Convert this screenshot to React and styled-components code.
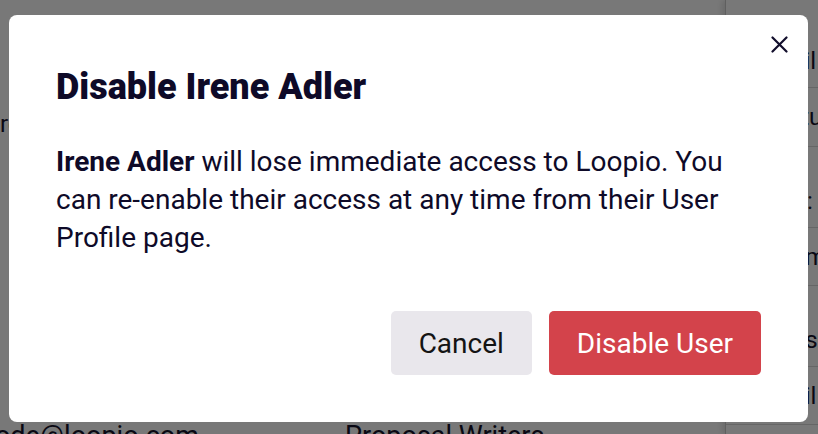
import React from "react";
import styled, { createGlobalStyle } from "styled-components";

const GlobalStyle = createGlobalStyle`
  html, body {
    margin: 0;
    padding: 0;
    height: 100%;
    overflow: hidden;
    background: #ffffff;
    font-family: Roboto, "Liberation Sans", sans-serif;
  }
  * { box-sizing: border-box; }
`;

const Page = styled.div`
  display: flex;
  width: 818px;
  height: 434px;
  background: #fff;
  color: #14112b;
`;

const Main = styled.div`
  flex: 1;
  display: flex;
  flex-direction: column;
  justify-content: space-between;
  padding-top: 110px;
  overflow: hidden;
`;

const MainText = styled.div`
  font-size: 24px;
  line-height: 28px;
  white-space: nowrap;
`;

const TableRow = styled.div`
  display: grid;
  grid-template-columns: 359px 1fr;
  margin-bottom: -16px;
  margin-left: -14px;
  font-size: 27px;
  line-height: 28px;
  white-space: nowrap;
`;

const SidePanel = styled.div`
  width: 93px;
  border-left: 1px solid #c9c9c9;
  box-shadow: -3px 0 6px rgba(0, 0, 0, 0.12);
  display: flex;
  flex-direction: column;
  overflow: hidden;
`;

const PanelRow = styled.div`
  height: ${(p) => p.$h}px;
  flex-shrink: 0;
  display: flex;
  align-items: ${(p) => (p.$low ? "flex-end" : "center")};
  padding: ${(p) => (p.$low ? "0 0 12px" : "0")};
  padding-left: ${(p) => p.$pad}px;
  border-bottom: 1px solid #d8d8d8;
  font-size: 24px;
  white-space: nowrap;
`;

const Overlay = styled.div`
  position: fixed;
  inset: 0;
  background: rgba(0, 0, 0, 0.53);
  display: flex;
  align-items: flex-start;
  padding: 15px 0 0 9px;
`;

const Modal = styled.div`
  position: relative;
  width: 799px;
  background: #fff;
  border-radius: 8px;
  padding: 50px 47px 47px 47px;
  color: #0e0a28;
`;

const CloseButton = styled.button`
  position: absolute;
  top: 20px;
  right: 20px;
  width: 18px;
  height: 18px;
  padding: 0;
  border: none;
  background: transparent;
  cursor: pointer;
  display: flex;
  align-items: center;
  justify-content: center;
`;

const Title = styled.h2`
  margin: 0;
  font-size: 36px;
  line-height: 44px;
  font-weight: 900;
`;

const Body = styled.p`
  margin: 34px 0 0;
  font-size: 28px;
  line-height: 38px;
  font-weight: 400;

  strong {
    font-weight: 700;
  }
`;

const Footer = styled.div`
  display: flex;
  justify-content: flex-end;
  gap: 17px;
  margin-top: 54px;
`;

const Button = styled.button`
  height: 64px;
  padding: 0 28px;
  border: none;
  border-radius: 5px;
  font-family: Roboto, "Liberation Sans", sans-serif;
  font-size: 28px;
  cursor: pointer;
  background: ${(p) => (p.$danger ? "#d3434b" : "#e9e7ec")};
  color: ${(p) => (p.$danger ? "#ffffff" : "#141414")};
`;

const CloseIcon = () => (
  <svg width="17" height="17" viewBox="0 0 17 17" fill="none">
    <path d="M1.5 1.5L15.5 15.5M15.5 1.5L1.5 15.5" stroke="#120e2c" strokeWidth="2.2" strokeLinecap="round" />
  </svg>
);

const panelRows = [
  { h: 88, low: true, pad: 29, text: "Detail" },
  { h: 59, pad: 40, text: "Statu" },
  { h: 81, low: true, pad: 34, text: "Role:" },
  { h: 58, pad: 40, text: "Team" },
  { h: 81, low: true, pad: 27, text: "User's" },
  { h: 58, pad: 31, text: "Email" },
];

export default function App() {
  return (
    <>
      <GlobalStyle />
      <Page>
        <Main>
          <MainText>reports</MainText>
          <TableRow>
            <span>rode@loopio.com</span>
            <span>Proposal Writers</span>
          </TableRow>
        </Main>
        <SidePanel>
          {panelRows.map((r) => (
            <PanelRow key={r.text} $h={r.h} $low={r.low} $pad={r.pad}>
              {r.text}
            </PanelRow>
          ))}
        </SidePanel>
      </Page>
      <Overlay>
        <Modal role="dialog" aria-modal="true">
          <CloseButton aria-label="Close">
            <CloseIcon />
          </CloseButton>
          <Title>Disable Irene Adler</Title>
          <Body>
            <strong>Irene Adler</strong> will lose immediate access to Loopio. You can re-enable their access at any
            time from their User Profile page.
          </Body>
          <Footer>
            <Button>Cancel</Button>
            <Button $danger>Disable User</Button>
          </Footer>
        </Modal>
      </Overlay>
    </>
  );
}
